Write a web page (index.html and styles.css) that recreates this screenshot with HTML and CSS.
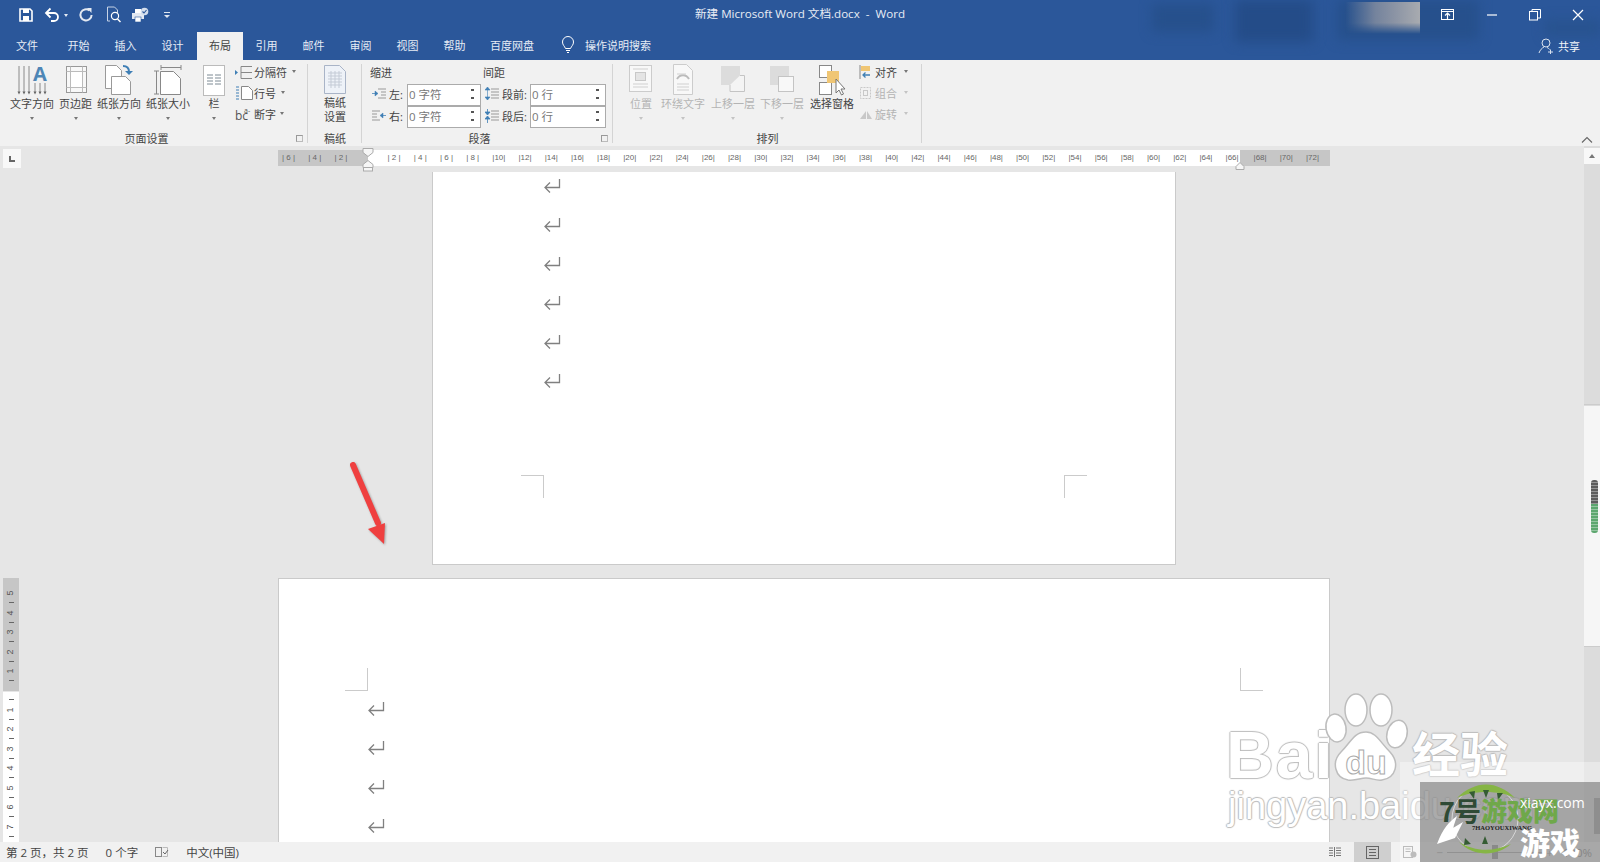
FILE: index.html
```html
<!DOCTYPE html>
<html lang="zh-CN">
<head>
<meta charset="utf-8">
<title>新建 Microsoft Word 文档.docx - Word</title>
<link rel="stylesheet" href="styles.css">
</head>
<body>
<div class="app">
  <header class="titlebar">
    <div class="qat">
      <svg class="q1" width="16" height="16" viewBox="0 0 16 16"><path d="M2 2h10l2 2v10H2z" fill="none" stroke="#fff" stroke-width="1.6"/><rect x="5" y="2" width="6" height="4" fill="#fff"/><rect x="5" y="9" width="6" height="5" fill="#fff"/></svg>
      <svg class="q2" width="16" height="16" viewBox="0 0 16 16"><path d="M3 6h7a3.6 3.6 0 0 1 0 8H7" fill="none" stroke="#fff" stroke-width="1.8"/><path d="M6.5 1.5 2 6l4.5 4.5" fill="none" stroke="#fff" stroke-width="1.8"/></svg>
      <i class="tri tri-w q3"></i>
      <svg class="q4" width="16" height="16" viewBox="0 0 16 16"><path d="M11.5 3.5A5.6 5.6 0 1 0 13.6 8" fill="none" stroke="#e3e9f2" stroke-width="2"/><path d="M9 1h4.5v5z" fill="#e3e9f2"/></svg>
      <svg class="q5" width="16" height="18" viewBox="0 0 16 18"><path d="M1.5 1h7l3 3v3M4 15H1.5V1" fill="none" stroke="#c6d3e6"/><circle cx="9" cy="10" r="3.6" fill="none" stroke="#fff" stroke-width="1.2"/><path d="M11.5 13l3 3" stroke="#fff" stroke-width="1.4"/></svg>
      <svg class="q6" width="18" height="16" viewBox="0 0 18 16"><rect x="1" y="6" width="12" height="6" fill="#e3e9f2"/><rect x="4" y="2" width="6" height="4" fill="#fff"/><rect x="4" y="10" width="6" height="5" fill="#fff" stroke="#2b579a" stroke-width=".6"/><circle cx="13.5" cy="4.5" r="3.8" fill="#d4deec"/><path d="M11.5 4.5l1.5 1.5 2.5-3" fill="none" stroke="#2b579a" stroke-width="1.1"/></svg>
      <svg class="q7" width="8" height="8" viewBox="0 0 8 8"><path d="M1 1.5h6" stroke="#dfe6f0"/><path d="M1 4h6L4 7z" fill="#dfe6f0"/></svg>
    </div>
    <div class="doc-title">新建 Microsoft Word 文档.docx &nbsp;-&nbsp; Word</div>
    <div class="smudge s1"></div>
    <div class="smudge s2"></div>
    <div class="smudge s3"></div>
    <div class="smudge s4"></div>
    <div class="glare"></div>
    <div class="winctl">
      <svg width="14" height="12" viewBox="0 0 14 12"><rect x=".5" y=".5" width="12" height="10" fill="none" stroke="#fff"/><path d="M.5 2.5h12" stroke="#fff"/><path d="M6.5 10V5M4 6.5l2.5-2.5L9 6.5" fill="none" stroke="#fff" stroke-width="1.2"/></svg>
      <svg width="12" height="12" viewBox="0 0 12 12"><path d="M1 6h10" stroke="#fff" stroke-width="1.2"/></svg>
      <svg width="12" height="12" viewBox="0 0 12 12"><rect x=".5" y="2.5" width="8" height="8.5" fill="none" stroke="#fff"/><path d="M3 2.5V.5h8.5V9H8.500" fill="none" stroke="#fff"/></svg>
      <svg width="12" height="12" viewBox="0 0 12 12"><path d="M1 1l10 10M11 1 1 11" stroke="#fff" stroke-width="1.2"/></svg>
    </div>
  </header>

  <nav class="tabs">
    <span class="tab tab-first">文件</span>
    <span class="tab tab-home">开始</span>
    <span class="tab">插入</span>
    <span class="tab">设计</span>
    <span class="tab tab-on">布局</span>
    <span class="tab">引用</span>
    <span class="tab">邮件</span>
    <span class="tab">审阅</span>
    <span class="tab">视图</span>
    <span class="tab">帮助</span>
    <span class="tab tab-wide">百度网盘</span>
    <svg class="bulb" width="14" height="18" viewBox="0 0 14 18"><path d="M4.500 12.500C3.500 10 1.500 9 1.500 6a5.500 5.500 0 0 1 11 0c0 3-2 4-3 6.500z" fill="none" stroke="#fff"/><path d="M5 14.500h4M6 16.500h2" stroke="#fff"/></svg>
    <span class="search">操作说明搜索</span>
    <span class="share">
      <svg width="16" height="16" viewBox="0 0 16 16"><circle cx="8" cy="5" r="4" fill="none" stroke="#d9e2ef"/><path d="M1 15c1-3 3-5 5-6M9 9.500c1 .3 2 1 2.500 2M10 14h5M12.500 11.500v5" fill="none" stroke="#d9e2ef"/></svg>
      共享
    </span>
  </nav>

  <section class="ribbon">
    <div class="group g-page">
      <div class="group-body">
        <div class="big">
          <svg width="32" height="34" viewBox="0 0 32 34"><path d="M3 3v27M8 3v27M13 3v27M19 20v10M24 20v10M29 20v10" stroke="#8a8a8a"/><path d="M1.500 28.500l1.500 3 1.500-3zM6.500 28.500l1.500 3 1.500-3zM11.500 28.500l1.500 3 1.500-3zM17.500 28.500l1.500 3 1.500-3zM22.500 28.500l1.500 3 1.500-3zM27.500 28.500l1.500 3 1.500-3z" fill="#666"/><text class="ico-a" x="24" y="18">A</text></svg>
          <span>文字方向</span><i class="tri"></i>
        </div>
        <div class="big">
          <svg width="24" height="34" viewBox="0 0 24 34"><rect x="2.500" y="3.500" width="20" height="26" fill="#f8f8f8" stroke="#999"/><path d="M6.500 3.500v26M18.500 3.500v26M2.500 8.500h20M2.500 24.500h20" stroke="#bbb"/><rect x="7" y="9" width="11" height="15" fill="#fff"/></svg>
          <span>页边距</span><i class="tri"></i>
        </div>
        <div class="big">
          <svg width="32" height="34" viewBox="0 0 32 34"><path d="M2.500 2.500h11l5 5v18h-16z" fill="#fff" stroke="#999"/><path d="M8.500 13.500h14l5 5v13h-19z" fill="#fff" stroke="#999"/><path d="M20 3c4 0 6 2 6 6" fill="none" stroke="#3f7fb5" stroke-width="2"/><path d="M22 8h8l-4 4z" fill="#3f7fb5"/></svg>
          <span>纸张方向</span><i class="tri"></i>
        </div>
        <div class="big">
          <svg width="30" height="34" viewBox="0 0 30 34"><path d="M8 4.500h20M8 2v5M28 2v5M3.500 8v23M1 8h5M1 31h5" stroke="#888" fill="none"/><path d="M7.500 8.500h13l7 7v16h-20z" fill="#fff" stroke="#888"/></svg>
          <span>纸张大小</span><i class="tri"></i>
        </div>
        <div class="big big-cols">
          <svg width="22" height="34" viewBox="0 0 22 34"><rect x=".5" y="2.500" width="21" height="30" fill="#fff" stroke="#bbb"/><path d="M4 12h6M12 12h6M4 15h6M12 15h6M4 18h6M12 18h6M4 21h6M12 21h6" stroke="#7d8a94"/></svg>
          <span>栏</span><i class="tri"></i>
        </div>
        <div class="small-list list-page">
          <div class="small"><svg width="19" height="16" viewBox="0 0 19 16"><path d="M7 2.500h11M7 8.500h11M7 14.500h11M7 2.500v12" stroke="#888" fill="none"/><path d="M1 6l3 2.500L1 11z" fill="#3f7fb5"/></svg><span>分隔符</span><i class="tri"></i></div>
          <div class="small"><svg width="19" height="16" viewBox="0 0 19 16"><path d="M7.500 1.500h7l4 4v9h-11z" fill="#fff" stroke="#888"/><path d="M2 2h3M2 5h3M2 8h3M2 11h3M2 14h3" stroke="#3f7fb5"/></svg><span>行号</span><i class="tri"></i></div>
          <div class="small small-hy"><svg width="20" height="20" viewBox="0 0 20 20"><text class="ico-bc" x="1" y="16">bc</text><text class="ico-a2" x="10" y="9">a-</text></svg><span>断字</span><i class="tri"></i></div>
        </div>
      </div>
      <div class="group-label lab-page">页面设置</div>
      <i class="launcher"></i>
    </div>

    <div class="group g-paper">
      <div class="group-body">
        <div class="big big-paper">
          <svg width="24" height="32" viewBox="0 0 24 32"><path d="M1.500 1.500h15l6 6v22h-21z" fill="#eef2f8" stroke="#a9b4c7"/><path d="M5 9h14M5 12h14M5 15h14M5 18h14M5 21h14M8 7v17M12 7v17M16 7v17" stroke="#c4cbd6"/></svg>
          <span>稿纸<br>设置</span>
        </div>
      </div>
      <div class="group-label">稿纸</div>
    </div>

    <div class="group g-para">
      <div class="para">
        <div class="para-head"><span>缩进</span><span>间距</span></div>
        <div class="para-row">
          <svg width="14" height="14" viewBox="0 0 14 14"><path d="M6 2h8M9 5h5M9 8h5M6 11h8" stroke="#999"/><path d="M0 6.500h3V4l3 2.500L3 9V6.500z" fill="#3f7fb5" stroke="#3f7fb5" stroke-width=".5"/></svg>
          <label class="lab-s">左:</label>
          <div class="spin"><span>0 字符</span><b></b></div>
          <svg class="second" width="14" height="14" viewBox="0 0 14 14"><path d="M6 2h8M6 5h8M6 8h8M6 11h8" stroke="#999"/><path d="M2.500 0 5 3H0zM2.500 13 5 10H0zM2.500 2v9" fill="#3f7fb5" stroke="#3f7fb5" stroke-width=".6"/></svg>
          <label class="lab-l">段前:</label>
          <div class="spin spin-l"><span>0 行</span><b></b></div>
        </div>
        <div class="para-row">
          <svg width="14" height="14" viewBox="0 0 14 14"><path d="M0 2h8M0 5h5M0 8h5M0 11h8" stroke="#999"/><path d="M14 6.500h-3V4L8 6.500 11 9V6.500z" fill="#3f7fb5" stroke="#3f7fb5" stroke-width=".5"/></svg>
          <label class="lab-s">右:</label>
          <div class="spin"><span>0 字符</span><b></b></div>
          <svg class="second" width="14" height="14" viewBox="0 0 14 14"><path d="M6 2h8M6 5h8M6 8h8M6 11h8" stroke="#999"/><path d="M2.500 6 5 3H0zM2.500 7 5 10H0zM2.500 0v3M2.500 10v4" fill="#3f7fb5" stroke="#3f7fb5" stroke-width=".8"/></svg>
          <label class="lab-l">段后:</label>
          <div class="spin spin-l"><span>0 行</span><b></b></div>
        </div>
      </div>
      <div class="group-label lab-para">段落</div>
      <i class="launcher"></i>
    </div>

    <div class="group g-arrange">
      <div class="group-body">
        <div class="big off pos">
          <svg width="24" height="34" viewBox="0 0 24 34"><rect x=".5" y="2.500" width="22" height="26" fill="#f8f8f8" stroke="#ccc"/><rect x="6.500" y="9.500" width="10" height="8" fill="#e4e4e4" stroke="#c8c8c8"/><path d="M4 6h15M4 21h15M4 24h15" stroke="#d0d0d0"/></svg>
          <span>位置</span><i class="tri"></i>
        </div>
        <div class="big off wrap-btn">
          <svg width="22" height="34" viewBox="0 0 22 34"><path d="M1.500 1.500h13l6 6v24h-19z" fill="#f8f8f8" stroke="#ccc"/><path d="M5 16c3-5 9-5 12 0" fill="none" stroke="#bbb" stroke-width="2"/><path d="M5 11h9M5 21h12M5 24h12M5 27h12" stroke="#d0d0d0"/></svg>
          <span>环绕文字</span><i class="tri"></i>
        </div>
        <div class="big off">
          <svg width="26" height="34" viewBox="0 0 26 34"><rect x="1" y="3" width="19" height="19" fill="#dcdcdc"/><path d="M20 12.500h4.500v16H10V22" fill="#f4f4f4" stroke="#c4c4c4"/></svg>
          <span>上移一层</span><i class="tri"></i>
        </div>
        <div class="big off back-btn">
          <svg width="26" height="34" viewBox="0 0 26 34"><rect x="1" y="3" width="19" height="19" fill="#dcdcdc"/><rect x="9.500" y="13.500" width="15" height="15" fill="#f8f8f8" stroke="#c4c4c4"/></svg>
          <span>下移一层</span><i class="tri"></i>
        </div>
        <div class="big">
          <svg width="28" height="34" viewBox="0 0 28 34"><rect x="1.500" y="2.500" width="12" height="12" fill="#fff" stroke="#888"/><rect x="1.500" y="19.500" width="12" height="12" fill="#fff" stroke="#888"/><path d="M9 8h12v12H9z" fill="#f0c674"/><path d="M18 16v14l3-3 2.500 5 2-1-2.500-5h4z" fill="#fff" stroke="#777"/></svg>
          <span>选择窗格</span>
        </div>
        <div class="small-list list-arr">
          <div class="small"><svg width="13" height="16" viewBox="0 0 13 16"><path d="M1 1v14" stroke="#888"/><path d="M2 2h9v5H2z" fill="#f0c674"/><path d="M11 11H4M6.500 8.500 4 11l2.500 2.500" fill="none" stroke="#3f7fb5" stroke-width="1.3"/></svg><span>对齐</span><i class="tri"></i></div>
          <div class="small off"><svg width="13" height="16" viewBox="0 0 13 16"><rect x="1.500" y="2.500" width="10" height="11" fill="none" stroke="#c8c8c8" stroke-dasharray="2 1"/><rect x="4.500" y="5.500" width="4" height="5" fill="none" stroke="#c8c8c8"/></svg><span>组合</span><i class="tri"></i></div>
          <div class="small off"><svg width="13" height="16" viewBox="0 0 13 16"><path d="M7 13H1l6-8zM8 13h5L8 5z" fill="#c8c8c8"/></svg><span>旋转</span><i class="tri"></i></div>
        </div>
      </div>
      <div class="group-label">排列</div>
    </div>

    <svg class="collapse" width="12" height="8" viewBox="0 0 12 8"><path d="M1 6.500 6 1.500l5 5" fill="none" stroke="#666" stroke-width="1.1"/></svg>
  </section>

  <div class="main">
    <div class="work">
      <div class="hruler-row">
        <div class="corner"><i></i></div>
        <div class="hruler">
          <div class="rsec rsec-left">
            <span>| 6 |</span><span>| 4 |</span><span>| 2 |</span>
          </div>
          <div class="rsec rsec-mid">
            <span>| 2 |</span><span>| 4 |</span><span>| 6 |</span><span>| 8 |</span><span>|10|</span><span>|12|</span><span>|14|</span><span>|16|</span><span>|18|</span><span>|20|</span><span>|22|</span><span>|24|</span><span>|26|</span><span>|28|</span><span>|30|</span><span>|32|</span><span>|34|</span><span>|36|</span><span>|38|</span><span>|40|</span><span>|42|</span><span>|44|</span><span>|46|</span><span>|48|</span><span>|50|</span><span>|52|</span><span>|54|</span><span>|56|</span><span>|58|</span><span>|60|</span><span>|62|</span><span>|64|</span><span>|66|</span>
          </div>
          <div class="rsec rsec-right">
            <span>|68|</span><span>|70|</span><span>|72|</span>
          </div>
          <svg class="marker m-left" width="12" height="24" viewBox="0 0 12 24"><path d="M1 .5h10v4l-5 4-5-4z" fill="#f6f6f6" stroke="#aaa"/><path d="M1 16.500l5-4 5 4v3H1z" fill="#f6f6f6" stroke="#aaa"/><rect x="1.500" y="19.500" width="9" height="3.500" fill="#f6f6f6" stroke="#aaa"/></svg>
          <svg class="marker m-right" width="10" height="8" viewBox="0 0 10 8"><path d="M1 7.500v-3l4-4 4 4v3z" fill="#f6f6f6" stroke="#aaa"/></svg>
        </div>
      </div>
      <div class="doc">
        <div class="vruler">
          <div class="vsec vsec-gray">
            <b>5</b><i></i><b>4</b><i></i><b>3</b><i></i><b>2</b><i></i><b>1</b><i></i>
          </div>
          <div class="vsec vsec-white">
            <i></i><b>1</b><i></i><b>2</b><i></i><b>3</b><i></i><b>4</b><i></i><b>5</b><i></i><b>6</b><i></i><b>7</b><i></i>
          </div>
        </div>
        <div class="canvas">
          <div class="page page-a">
            <div class="ret"><svg width="18" height="16" viewBox="0 0 18 16"><path d="M16.500 1v8.500H2M7 4.500l-5 5 5 5" fill="none" stroke="#808080" stroke-width="1.3"/></svg></div>
            <div class="ret"><svg width="18" height="16" viewBox="0 0 18 16"><path d="M16.500 1v8.500H2M7 4.500l-5 5 5 5" fill="none" stroke="#808080" stroke-width="1.3"/></svg></div>
            <div class="ret"><svg width="18" height="16" viewBox="0 0 18 16"><path d="M16.500 1v8.500H2M7 4.500l-5 5 5 5" fill="none" stroke="#808080" stroke-width="1.3"/></svg></div>
            <div class="ret"><svg width="18" height="16" viewBox="0 0 18 16"><path d="M16.500 1v8.500H2M7 4.500l-5 5 5 5" fill="none" stroke="#808080" stroke-width="1.3"/></svg></div>
            <div class="ret"><svg width="18" height="16" viewBox="0 0 18 16"><path d="M16.500 1v8.500H2M7 4.500l-5 5 5 5" fill="none" stroke="#808080" stroke-width="1.3"/></svg></div>
            <div class="ret"><svg width="18" height="16" viewBox="0 0 18 16"><path d="M16.500 1v8.500H2M7 4.500l-5 5 5 5" fill="none" stroke="#808080" stroke-width="1.3"/></svg></div>
            <i class="crop crop-a1"></i>
            <i class="crop crop-a2"></i>
          </div>
          <div class="page page-b">
            <div class="ret"><svg width="18" height="16" viewBox="0 0 18 16"><path d="M16.500 1v8.500H2M7 4.500l-5 5 5 5" fill="none" stroke="#808080" stroke-width="1.3"/></svg></div>
            <div class="ret"><svg width="18" height="16" viewBox="0 0 18 16"><path d="M16.500 1v8.500H2M7 4.500l-5 5 5 5" fill="none" stroke="#808080" stroke-width="1.3"/></svg></div>
            <div class="ret"><svg width="18" height="16" viewBox="0 0 18 16"><path d="M16.500 1v8.500H2M7 4.500l-5 5 5 5" fill="none" stroke="#808080" stroke-width="1.3"/></svg></div>
            <div class="ret"><svg width="18" height="16" viewBox="0 0 18 16"><path d="M16.500 1v8.500H2M7 4.500l-5 5 5 5" fill="none" stroke="#808080" stroke-width="1.3"/></svg></div>
            <i class="crop crop-b1"></i>
            <i class="crop crop-b2"></i>
          </div>
        </div>
      </div>
    </div>
    <aside class="scrollbar">
      <div class="sb-up"><i></i></div>
      <div class="sb-track"></div>
      <div class="sb-thumb"><div class="sb-pill"></div></div>
      <div class="sb-end"></div>
    </aside>
  </div>

  <footer class="status">
    <span>第 2 页，共 2 页</span>
    <span>0 个字</span>
    <svg width="14" height="12" viewBox="0 0 14 12"><rect x=".5" y="1.500" width="6" height="9" fill="none" stroke="#888"/><path d="M7.500 1.500h5v9h-5" fill="none" stroke="#bbb"/><path d="M8 6l2 2 3-4" fill="none" stroke="#666"/></svg>
    <span>中文(中国)</span>
    <div class="status-right">
      <svg width="14" height="12" viewBox="0 0 14 12"><path d="M6.500 1v10M1 2h4M1 4.500h4M1 7h4M1 9.500h4M8 2h5M8 4.500h5M8 7h5M8 9.500h5" stroke="#777" fill="none"/></svg>
      <span class="view-on"><svg width="13" height="13" viewBox="0 0 13 13"><rect x=".5" y=".5" width="12" height="12" fill="none" stroke="#666"/><path d="M3 3.500h7M3 6.500h7M3 9.500h7" stroke="#666"/></svg></span>
      <svg width="14" height="12" viewBox="0 0 14 12"><rect x=".5" y=".5" width="9" height="11" fill="none" stroke="#999"/><path d="M2.500 3h5M2.500 5.500h5" stroke="#999"/><circle cx="10.500" cy="8.500" r="3" fill="#999"/></svg>
      <span class="zoom-minus">−</span>
      <span class="slider"><i></i></span>
      <span class="zoom-plus">+</span>
      <span class="zoom-val">100%</span>
    </div>
  </footer>

  <svg class="arrow" width="46" height="92" viewBox="0 0 46 92"><path d="M7 7l25 58" stroke="#ef4040" stroke-width="6" stroke-linecap="round"/><path d="M22 71l17-6-1 21z" fill="#ef4040"/></svg>

  <div class="baidu">
    <span class="bd-bai">Bai</span>
    <svg class="bd-paw" width="90" height="100" viewBox="0 0 90 100"><g fill="#fff" stroke="#bdbdbd" stroke-width="1.500"><ellipse cx="14" cy="38" rx="10" ry="14" transform="rotate(-10 14 38)"/><ellipse cx="34" cy="20" rx="11" ry="16"/><ellipse cx="59" cy="20" rx="11" ry="16"/><ellipse cx="75" cy="44" rx="10" ry="14" transform="rotate(15 75 44)"/><path d="M44 42c10 0 14 10 24 20 10 11 6 26-8 28-6 1-10-2-16-2s-10 3-18 2C13 88 9 72 19 62c10-10 13-20 25-20z"/></g><text class="bd-du" x="44" y="84">du</text></svg>
    <span class="bd-jy">经验</span>
    <span class="bd-url">jingyan.baidu.com</span>
  </div>

  <div class="wm-light"></div>
  <div class="wm-dark">
    <svg class="wm-logo" width="100" height="80" viewBox="0 0 100 80"><circle cx="50" cy="37" r="33" fill="none" stroke="#fff" stroke-opacity=".55"/><path d="M22 16C40-2 62-2 80 16 64 8 38 8 22 16z" fill="#86b545"/><path d="M24 60c16 16 38 14 52 2-18 8-36 8-52-2z" fill="#86b545"/><path d="M48 8l3 8 3-8zM34 10l5 7 1-8zM68 11l-5 7-1-7zM50 54l3 8h-6zM30 56l6 6-7 1z" fill="#355c33"/><path d="M2 62C8 46 14 40 22 34l-4 12 10-6-8 16c-6 2-12 4-18 6z" fill="#fff"/></svg>
    <span class="wm-seven">7号</span>
    <span class="wm-game">游戏网</span>
    <span class="wm-site">xiayx.com</span>
    <span class="wm-en">7HAOYOUXIWANG</span>
    <span class="wm-big">游戏</span>
  </div>
</div>
</body>
</html>
```
FILE: styles.css
```css
* { box-sizing: border-box; }
html, body { margin: 0; padding: 0; }
body {
  font-family: "Open Sans", "Noto Sans CJK SC", sans-serif;
  font-size: 11px;
  color: #444;
  background: #e6e6e6;
}
i { display: block; font-style: normal; }
svg { display: block; flex: none; }

.app {
  position: relative;
  width: 1600px;
  height: 862px;
  overflow: hidden;
  display: flex;
  flex-direction: column;
}

/* title bar */
.titlebar {
  position: relative;
  z-index: 1;
  height: 30px;
  flex: none;
  background: #2b579a;
  color: #fff;
  display: grid;
  grid-template-columns: 1fr auto 1fr;
  align-items: center;
}
.qat { display: flex; align-items: center; padding-left: 18px; }
.q2 { margin-left: 10px; }
.q3 { margin-left: 4px; }
.q4 { margin-left: 10px; }
.q5 { margin-left: 12px; }
.q6 { margin-left: 9px; }
.q7 { margin-left: 14px; }
.doc-title { font-size: 11.600px; line-height: 28px; height: 30px; color: #e8edf5; white-space: nowrap; }
.winctl {
  display: flex;
  align-items: center;
  justify-content: flex-end;
  gap: 31px;
  padding-right: 16px;
  position: relative;
  z-index: 2;
}
.smudge {
  position: absolute;
  background: #26508c;
  filter: blur(6px);
  top: 0;
}
.s1 { left: 1152px; width: 62px; top: 4px; height: 28px; }
.s2 { left: 1235px; width: 78px; height: 42px; background: #244c88; }
.s3 { left: 1337px; width: 142px; height: 40px; }
.s4 { left: 1545px; width: 55px; top: 20px; height: 16px; background: #28538f; }
.glare {
  position: absolute;
  left: 1345px;
  top: 2px;
  width: 75px;
  height: 32px;
  background: linear-gradient(90deg, rgba(130,140,160,0), #74839d 40%, #8a93a4 65%, #a8abb0);
  -webkit-mask-image: linear-gradient(#000 65%, transparent);
  mask-image: linear-gradient(#000 65%, transparent);
}

/* tabs */
.tabs {
  height: 30px;
  flex: none;
  display: flex;
  align-items: flex-end;
  background: #2b579a;
  color: #e6ecf5;
  position: relative;
}
.tab {
  width: 47px;
  height: 28px;
  line-height: 28px;
  text-align: center;
  white-space: nowrap;
}
.tab-first { margin-left: 4px; width: 46px; }
.tab-home { margin-left: 5px; }
.tab-on { background: #f1f1f1; color: #444; width: 46px; margin-left: 1px; }
.tab-wide { width: 68px; margin-left: 0; }
.bulb { margin: 0 0 6px 15px; }
.search { height: 28px; line-height: 28px; margin-left: 10px; white-space: nowrap; }
.share {
  margin-left: auto;
  height: 28px;
  padding-right: 20px;
  display: flex;
  align-items: center;
  gap: 4px;
  color: #f2f5fa;
  position: relative;
  z-index: 2;
}

/* ribbon */
.ribbon {
  height: 86px;
  flex: none;
  background: #f1f1f1;
  display: flex;
  position: relative;
}
.group {
  position: relative;
  display: flex;
  flex-direction: column;
  height: 86px;
}
.group::after {
  content: "";
  position: absolute;
  right: 0;
  top: 4px;
  bottom: 3px;
  width: 1px;
  background: #d4d4d4;
}
.g-page { width: 308px; }
.g-paper { width: 54px; }
.g-para { width: 251px; }
.g-arrange { width: 309px; }
.group-body { height: 72px; display: flex; align-items: flex-start; gap: 5px; padding-left: 10px; }
.g-paper .group-body { padding-left: 0; justify-content: center; }
.g-arrange .group-body { padding-left: 16px; gap: 5px; }
.group-label { height: 14px; line-height: 14px; text-align: center; white-space: nowrap; }
.lab-page { padding-right: 15px; }
.lab-para { padding-right: 16px; }
.launcher {
  position: absolute;
  right: 5px;
  bottom: 4px;
  width: 7px;
  height: 7px;
  border-left: 1px solid #999;
  border-top: 1px solid #999;
  border-right: 1px solid #bbb;
  border-bottom: 1px solid #bbb;
}
.big {
  display: flex;
  flex-direction: column;
  align-items: center;
  padding-top: 3px;
  white-space: nowrap;
  line-height: 15px;
}
.big svg { height: 34px; margin-bottom: -1px; }
.big .tri { margin-top: 6px; }
.big-cols { width: 22px; margin-left: 8px; }
.big-paper span { text-align: center; line-height: 14px; }
.off { color: #b4b4b4; }
.off .tri { border-top-color: #c4c4c4; }
.pos { margin-right: 3px; }
.wrap-btn { margin-right: 1px; }
.back-btn { margin-right: 1px; }
.tri {
  width: 0;
  height: 0;
  border-left: 2.500px solid transparent;
  border-right: 2.500px solid transparent;
  border-top: 3px solid #777;
  flex: none;
}
.tri-w { border-top-color: #e6ecf5; }
.ico-a { font: 700 20px "Open Sans", sans-serif; fill: #4e86b6; text-anchor: middle; }
.ico-bc { font: 12px "Open Sans", sans-serif; fill: #555; }
.ico-a2 { font: 7px "Open Sans", sans-serif; fill: #555; }

.small-list { display: flex; flex-direction: column; padding-top: 1px; }
.list-page { margin-left: 4px; }
.list-arr { margin-left: 0; }
.small { height: 21px; display: flex; align-items: center; gap: 1px; white-space: nowrap; }
.small .tri { margin-left: 4px; }
.small-hy { gap: 0; }
.list-arr .small { gap: 3px; }

/* paragraph group */
.para { height: 72px; padding-left: 10px; }
.para-head {
  height: 23px;
  display: flex;
  align-items: center;
  margin-left: -2px;
}
.para-head span { width: 113px; }
.para-row { height: 22px; display: flex; align-items: center; }
.lab-s { width: 18px; margin-left: 3px; white-space: nowrap; }
.lab-l { width: 28px; margin-left: 3px; white-space: nowrap; }
.second { margin-left: 4px; }
.spin {
  width: 74px;
  height: 22px;
  background: #fff;
  border: 1px solid #ababab;
  display: flex;
  align-items: center;
  justify-content: space-between;
  padding: 0 5px 2px 1px;
  color: #777;
  font-size: 11.500px;
  margin-bottom: -1px;
}
.spin-l { width: 76px; }
.spin b {
  width: 5px;
  height: 12px;
  background:
    linear-gradient(#555, #555) center 1px / 3px 2px no-repeat,
    linear-gradient(#555, #555) center 9px / 3px 2px no-repeat;
}
.collapse { position: absolute; left: 1581px; top: 76px; }

/* main */
.main { flex: 1; min-height: 0; display: flex; }
.work { flex: 1; min-width: 0; display: flex; flex-direction: column; }

.hruler-row {
  height: 26px;
  flex: none;
  display: flex;
  align-items: flex-start;
  background: #e6e6e6;
}
.corner {
  width: 18px;
  height: 19px;
  margin: 3px 0 0 3px;
  background: #f8f8f8;
  display: flex;
  align-items: center;
  justify-content: center;
}
.corner i {
  width: 6px;
  height: 6px;
  border-left: 2px solid #666;
  border-bottom: 2px solid #666;
}
.hruler {
  position: relative;
  display: flex;
  height: 16px;
  margin: 4px 0 0 257px;
  font: 8px/16px "Liberation Sans", sans-serif;
  color: #666;
}
.rsec { display: flex; height: 16px; flex: none; }
.rsec span { width: 26.200px; flex: none; text-align: center; white-space: nowrap; }
.rsec-left {
  width: 90px;
  background: #c6c6c6;
  justify-content: flex-end;
  padding-right: 14px;
  overflow: hidden;
}
.rsec-mid { width: 872px; background: #fff; padding-left: 13px; }
.rsec-right { width: 90px; background: #c6c6c6; padding-left: 7px; }
.marker { position: absolute; }
.m-left { left: 84px; top: -2px; }
.m-right { left: 957px; top: 12px; }

.doc { flex: 1; min-height: 0; display: flex; overflow: hidden; }
.vruler {
  width: 19px;
  flex: none;
  padding: 406px 0 0 3px;
  font: 9px/9.750px "Liberation Sans", sans-serif;
  color: #555;
}
.vsec {
  width: 16px;
  display: flex;
  flex-direction: column;
  align-items: center;
}
.vsec-gray { height: 113px; background: #c6c6c6; padding-top: 10px; margin-bottom: 1px; }
.vsec-white { height: 160px; background: #fff; padding-top: 3px; }
.vsec b {
  font-weight: 400;
  height: 9.750px;
  width: 10px;
  text-align: center;
  transform: rotate(-90deg);
}
.vsec i {
  height: 9.750px;
  width: 5px;
  background: linear-gradient(#666, #666) center / 5px 1px no-repeat;
}
.canvas { flex: 1; min-width: 0; }
.page {
  position: relative;
  background: #fff;
  box-shadow: 0 0 0 1px #cacaca;
}
.page-a { width: 742px; height: 392px; margin-left: 414px; padding-left: 110px; }
.page-b { width: 1050px; height: 300px; margin: 15px 0 0 260px; padding: 116px 0 0 88px; }
.ret { height: 39px; padding-top: 6px; }
.crop { position: absolute; width: 23px; height: 23px; border: 0 solid #cbcbcb; }
.crop-a1 { left: 88px; top: 303px; border-top-width: 1px; border-right-width: 1px; }
.crop-a2 { left: 631px; top: 303px; border-top-width: 1px; border-left-width: 1px; }
.crop-b1 { left: 66px; top: 89px; border-bottom-width: 1px; border-right-width: 1px; }
.crop-b2 { left: 961px; top: 89px; border-bottom-width: 1px; border-left-width: 1px; }

/* scrollbar */
.scrollbar {
  width: 16px;
  flex: none;
  background: #dcdcdc;
  display: flex;
  flex-direction: column;
}
.sb-up {
  height: 16px;
  margin-top: 2px;
  background: #f8f8f8;
  display: flex;
  align-items: center;
  justify-content: center;
}
.sb-up i {
  border-left: 3.500px solid transparent;
  border-right: 3.500px solid transparent;
  border-bottom: 4px solid #777;
}
.sb-track { height: 241px; border-bottom: 1px solid #ccc; }
.sb-thumb {
  height: 241px;
  margin-top: 1px;
  background: #f6f6f6;
  border-bottom: 1px solid #ccc;
  padding: 74px 0 0 7px;
}
.sb-pill {
  width: 7px;
  height: 53px;
  border-radius: 3px;
  background:
    repeating-linear-gradient(transparent 0 2px, rgba(255,255,255,.35) 2px 3px),
    linear-gradient(#5c5c5c 0 45%, #5ca66e 45% 100%);
}
.sb-end {
  flex: 1;
  position: relative;
}
.sb-end::after {
  content: "";
  position: absolute;
  left: 10px;
  top: 151px;
  width: 6px;
  height: 36px;
  background: #8c8c8c;
}

/* status bar */
.status {
  height: 20px;
  flex: none;
  background: #f1f1f1;
  display: flex;
  align-items: center;
  gap: 17px;
  padding-left: 6px;
  font-size: 11.500px;
  white-space: nowrap;
}
.status-right {
  margin-left: auto;
  display: flex;
  align-items: center;
  height: 20px;
  padding-right: 8px;
}
.view-on {
  width: 37px;
  height: 20px;
  margin: 0 12px;
  background: #cfcfcf;
  display: flex;
  align-items: center;
  justify-content: center;
}
.zoom-minus { margin-left: 20px; color: #888; }
.slider {
  position: relative;
  width: 95px;
  height: 1px;
  margin: 0 4px;
  background: #999;
}
.slider i {
  position: absolute;
  left: 45px;
  top: -7px;
  width: 6px;
  height: 14px;
  background: #777;
}
.zoom-plus { color: #888; margin-right: 10px; }
.zoom-val { color: #666; }

/* overlays */
.arrow {
  position: absolute;
  left: 346px;
  top: 458px;
  filter: drop-shadow(1px 1px 1px rgba(0,0,0,.3));
}
.baidu { position: absolute; left: 0; top: 0; width: 1600px; height: 862px; pointer-events: none; }
.baidu span {
  position: absolute;
  color: #fff;
  text-shadow: 1px 0 1px #bcbcbc, -1px 0 1px #bcbcbc, 0 1px 1px #bcbcbc, 0 -1px 1px #bcbcbc;
  white-space: nowrap;
  line-height: 1;
}
.bd-bai { left: 1226px; top: 722px; font: 700 66px/1 "Liberation Sans", sans-serif; letter-spacing: 2px; }
.bd-paw { position: absolute; left: 1322px; top: 690px; }
.bd-du { font: 700 34px "Liberation Sans", sans-serif; fill: #fff; stroke: #aaa; stroke-width: 1; text-anchor: middle; }
.bd-jy { left: 1412px; top: 727px; font: 700 48px/1 "Noto Sans CJK SC", sans-serif; }
.bd-url { left: 1228px; top: 787px; font: 400 38px/1 "Liberation Sans", sans-serif; }
.wm-light {
  position: absolute;
  left: 1400px;
  top: 762px;
  width: 200px;
  height: 100px;
  background: rgba(255,255,255,.35);
}
.wm-dark {
  position: absolute;
  left: 1420px;
  top: 782px;
  width: 180px;
  height: 80px;
  background: rgba(120,120,120,.62);
}
.wm-dark span { position: absolute; white-space: nowrap; line-height: 1; }
.wm-logo { position: absolute; left: 15px; top: 0; }
.wm-seven { left: 19px; top: 15px; font: 700 27px/1 "Noto Sans CJK SC", sans-serif; color: #2f4a35; letter-spacing: -1px; }
.wm-game { left: 61px; top: 15px; font: 900 26px/1 "Noto Sans CJK SC", sans-serif; color: #6fa84a; }
.wm-site { left: 100px; top: 14px; font: 400 14px/1 "Open Sans", sans-serif; color: #fff; }
.wm-en { left: 52px; top: 43px; font: 700 6.500px/1 "Liberation Serif", serif; color: #222; }
.wm-big { left: 100px; top: 44px; font: 900 30px/1 "Noto Sans CJK SC", sans-serif; color: #fff; }
```
